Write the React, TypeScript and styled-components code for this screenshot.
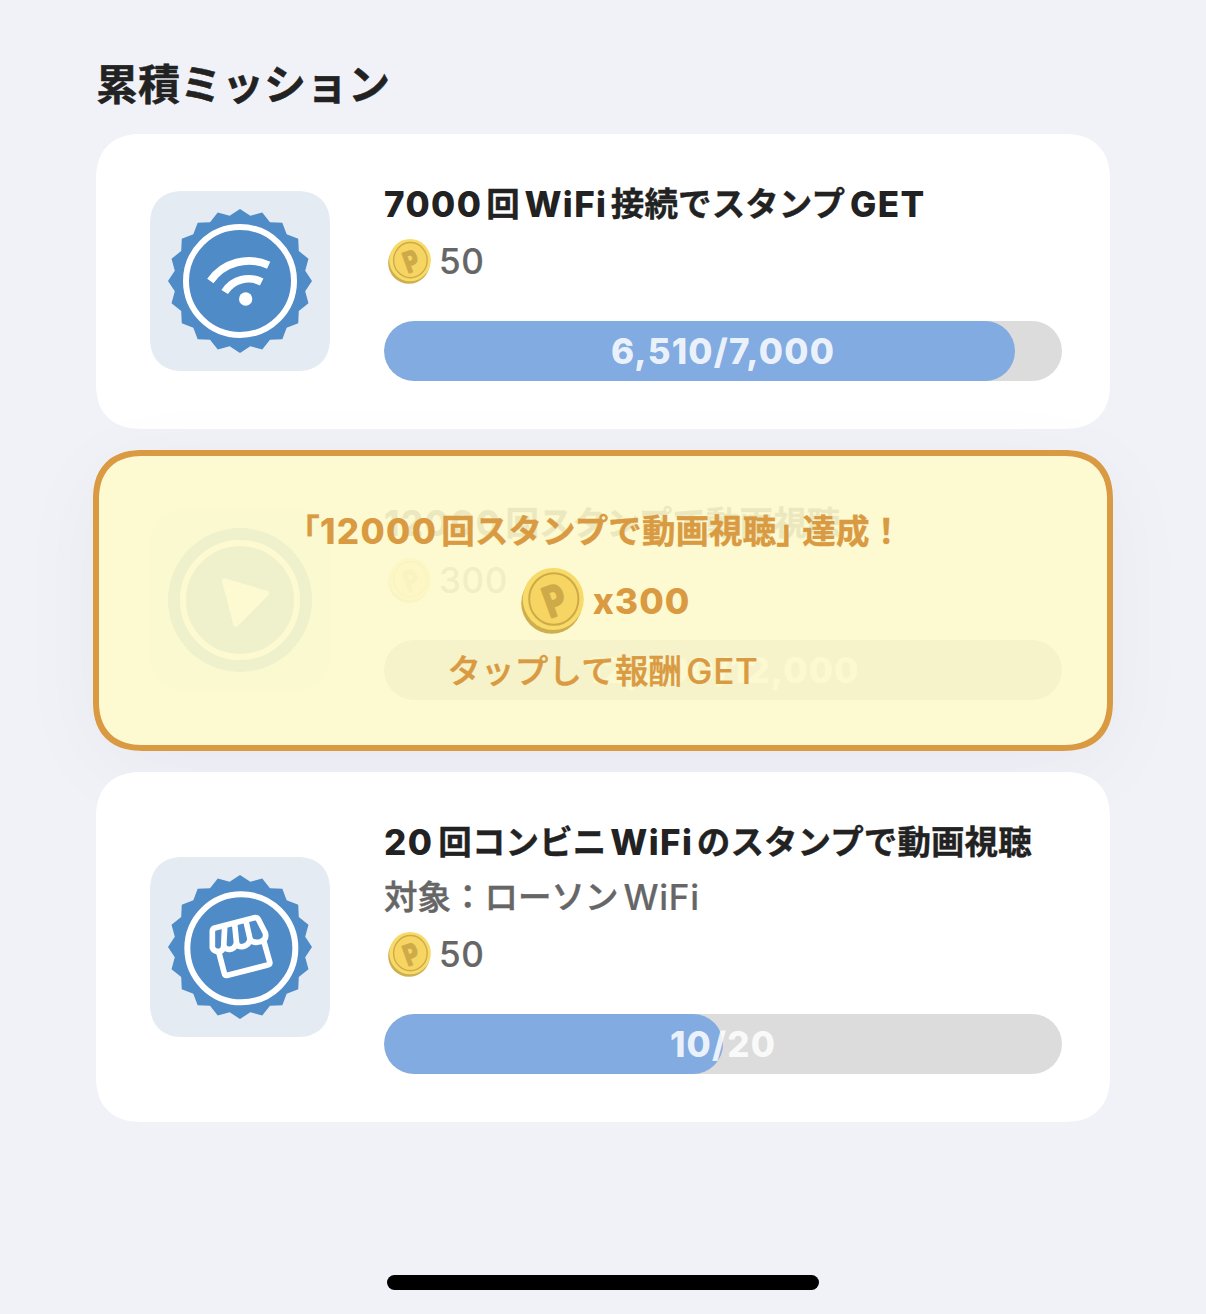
import React from 'react';
import styled, { createGlobalStyle, css } from 'styled-components';

const theme = {
  colors: {
    background: '#f1f2f8',
    surface: '#ffffff',
    textPrimary: '#222222',
    textSecondary: '#666666',
    badge: '#e4ebf3',
    seal: '#4f8bc7',
    track: '#dcdcdc',
    fill: '#82abe1',
    fillDone: '#a3a3a3',
    gold: '#d99a41',
    overlay: 'rgba(253, 250, 205, 0.92)',
  },
  font: `Inter, 'Noto Sans CJK JP', sans-serif`,
};

const GlobalStyle = createGlobalStyle`
  body {
    margin: 0;
    background: ${theme.colors.background};
    font-family: ${theme.font};
    color: ${theme.colors.textPrimary};
  }
`;

// Continuous corners where the browser can draw them
const smoothCorners = (radius: number, smoothRadius: number) => css`
  border-radius: ${radius}px;

  @supports (corner-shape: superellipse(1.25)) {
    border-radius: ${smoothRadius}px;
    corner-shape: superellipse(1.25);
  }
`;

const Page = styled.main`
  box-sizing: border-box;
  display: flex;
  flex-direction: column;
  width: 1206px;
  height: 1314px;
  padding: 55px 96px 24px;
  overflow: hidden;
`;

const Heading = styled.h1`
  margin: 0 0 19px;
  height: 60px;
  font-size: 42px;
  line-height: 60px;
  font-weight: 700;
  -webkit-text-stroke: 0.5px currentColor;
  white-space: nowrap;
`;

const MissionList = styled.div`
  display: flex;
  flex-direction: column;
  gap: 24px;
`;

const Card = styled.section`
  position: relative;
  z-index: 0;
  box-sizing: border-box;
  display: flex;
  align-items: center;
  gap: 54px;
  padding: 48px 48px 48px 54px;
  background: ${theme.colors.surface};
  ${smoothCorners(40, 46)}
`;

const Badge = styled.div`
  flex: none;
  width: 180px;
  height: 180px;
  margin-bottom: 1px;
  overflow: hidden;
  background: ${theme.colors.badge};
  ${smoothCorners(30, 34)}

  svg {
    display: block;
  }
`;

const Body = styled.div`
  flex: 1;
  min-width: 0;
`;

const lineText = css`
  display: flex;
  height: 42px;
  font-size: 33.5px;
  line-height: 42px;
  white-space: nowrap;
`;

const boldText = css`
  ${lineText}
  font-weight: 700;
  letter-spacing: 0.1px;
  -webkit-text-stroke: 0.4px currentColor;
`;

const mediumText = css`
  ${lineText}
  font-weight: 500;
  -webkit-text-stroke: 0.5px currentColor;
`;

const Title = styled.h2`
  ${boldText}
  margin: 0;
  padding-top: 1px;
`;

const Target = styled.p`
  ${mediumText}
  margin: 13px 0 0;
  color: ${theme.colors.textSecondary};
`;

const Latin = styled.span<{ $before?: number; $after?: number; $bold?: boolean }>`
  margin-left: ${props => props.$before ?? 0}px;
  margin-right: ${props => props.$after ?? 0}px;
  font-size: 35px;
  font-weight: ${props => (props.$bold ? 800 : 500)};
  letter-spacing: ${props => (props.$bold ? 1.4 : 0.7)}px;
  -webkit-text-stroke: ${props => (props.$bold ? 0 : 0.2)}px currentColor;
`;

const Reward = styled.div`
  display: flex;
  align-items: center;
  gap: 8px;
  height: 48px;
  margin: 12px 0 36px;
  padding-left: 4px;
  font-size: 35px;
  font-weight: 500;
  letter-spacing: 0.6px;
  -webkit-text-stroke: 0.2px currentColor;
  color: ${theme.colors.textSecondary};
`;

const Track = styled.div`
  display: grid;
  height: 60px;
  overflow: hidden;
  border-radius: 30px;
  background: ${theme.colors.track};
`;

const Fill = styled.div<{ $done: boolean }>`
  grid-area: 1 / 1;
  border-radius: 30px;
  background: ${props => (props.$done ? theme.colors.fillDone : theme.colors.fill)};
`;

const BarLabel = styled.span`
  grid-area: 1 / 1;
  z-index: 1;
  text-align: center;
  font-size: 35px;
  line-height: 60px;
  font-weight: 800;
  letter-spacing: 1.2px;
  color: rgba(255, 255, 255, 0.86);
`;

const Overlay = styled.button`
  position: absolute;
  inset: -3px;
  z-index: 2;
  box-sizing: border-box;
  display: flex;
  flex-direction: column;
  align-items: center;
  justify-content: center;
  gap: 16px;
  padding: 0;
  border: 6px solid ${theme.colors.gold};
  background: ${theme.colors.overlay};
  background-clip: padding-box;
  box-shadow: 0 18px 90px rgba(20, 20, 50, 0.04);
  font-family: inherit;
  color: ${theme.colors.gold};
  ${smoothCorners(43, 50)}
`;

const ClearedText = styled.span`
  ${boldText}
  padding-top: 1px;
`;

const Bracket = styled.span<{ $close?: boolean }>`
  width: 17px;
  display: flex;
  justify-content: ${props => (props.$close ? 'flex-start' : 'flex-end')};
  margin-right: ${props => (props.$close ? 9 : 0)}px;
`;

const ClearedReward = styled.span`
  display: flex;
  align-items: center;
  gap: 9px;
  height: 66px;
  padding-left: 5px;
  font-size: 35.5px;
  font-weight: 800;
  letter-spacing: 1px;
`;

const TapText = styled.span`
  ${mediumText}
  letter-spacing: 0.2px;
`;

const HomeIndicator = styled.div`
  align-self: center;
  width: 432px;
  height: 15px;
  margin-top: auto;
  border-radius: 8px;
  background: #000000;
`;

const SEAL_POINTS = Array.from({ length: 40 }, (_, i) => {
  const radius = i % 2 === 0 ? 216 : 198;
  const angle = (i * Math.PI) / 20;
  const x = 270 + radius * Math.sin(angle);
  const y = 270 - radius * Math.cos(angle);
  return `${x.toFixed(1)},${y.toFixed(1)}`;
}).join(' ');

const WifiSeal: React.FC = () => (
  <svg width="180" height="180" viewBox="0 0 540 540" fill="none">
    <polygon points={SEAL_POINTS} fill={theme.colors.seal} />
    <circle cx="270" cy="270" r="162" stroke="#fff" strokeWidth="18" />
    <g stroke="#fff" strokeWidth="23">
      <path d="M181 270A141 141 0 0 1 356 223" />
      <path d="M224 303A85 85 0 0 1 335 273" />
    </g>
    <circle cx="287" cy="324" r="20" fill="#fff" />
  </svg>
);

const ShopSeal: React.FC = () => (
  <svg width="180" height="180" viewBox="0 0 540 540" fill="none">
    <polygon points={SEAL_POINTS} fill={theme.colors.seal} />
    <circle cx="274" cy="274" r="162" stroke="#fff" strokeWidth="18" />
    <g stroke="#fff" strokeWidth="17" strokeLinecap="round" strokeLinejoin="round">
      <path d="M187 272V223Q187 215 194 213L313 182Q321 180 325 187L346 228Q351 248 332 254Q312 260 300 248Q296 266 278 269Q265 271 259 260Q253 276 240 277Q229 278 222 269Q216 285 204 284Q190 282 187 272Z" />
      <path d="M224 210L221 270M254 202L260 262M288 193L301 250" />
      <path d="M207 288L223 349Q225 357 233 355L353 324Q361 322 359 314L342 254" />
    </g>
  </svg>
);

const PlaySeal: React.FC = () => (
  <svg width="180" height="180" viewBox="0 0 540 540" fill="none">
    <circle cx="270" cy="270" r="216" fill={theme.colors.seal} />
    <circle cx="270" cy="270" r="171" stroke="#fff" strokeWidth="18" />
    <path
      d="M224 213L349 250L258 342Z"
      fill="#fff"
      stroke="#fff"
      strokeWidth="16"
      strokeLinejoin="round"
    />
  </svg>
);

const Coin: React.FC<{ width: number; height: number }> = ({ width, height }) => (
  <svg width={width} height={height} viewBox="0 0 63 66">
    <ellipse cx="30.7" cy="35.2" rx="30.5" ry="30.5" fill="#cfae4f" />
    <ellipse cx="32.3" cy="31" rx="30.5" ry="31" fill="#f7da67" />
    <ellipse cx="32.8" cy="31" rx="24.6" ry="25.8" fill="#f6d562" stroke="#cfaa49" strokeWidth="2" />
    <text
      transform="translate(33.6 32.2) rotate(-20) scale(0.8 1)"
      x="0.5"
      y="15.2"
      textAnchor="middle"
      fontFamily="Inter, sans-serif"
      fontSize="41"
      fontWeight="700"
      fill="#cfaa49"
      stroke="#cfaa49"
      strokeWidth="2.6"
      strokeLinejoin="round"
    >
      P
    </text>
  </svg>
);

interface MissionCardProps {
  seal: React.ReactNode;
  title: React.ReactNode;
  target?: React.ReactNode;
  points: number;
  current: number;
  goal: number;
  children?: React.ReactNode;
}

const MissionCard: React.FC<MissionCardProps> = ({
  seal,
  title,
  target,
  points,
  current,
  goal,
  children,
}) => (
  <Card>
    <Badge>{seal}</Badge>
    <Body>
      <Title>{title}</Title>
      {target && <Target>{target}</Target>}
      <Reward>
        <Coin width={43} height={45} />
        {points}
      </Reward>
      <Track>
        <Fill $done={current >= goal} style={{ width: `${(current / goal) * 100}%` }} />
        <BarLabel>
          {current.toLocaleString('en-US')}/{goal.toLocaleString('en-US')}
        </BarLabel>
      </Track>
    </Body>
    {children}
  </Card>
);

const App: React.FC = () => (
  <>
    <GlobalStyle />
    <Page>
      <Heading>累積ミッション</Heading>
      <MissionList>
        <MissionCard
          seal={<WifiSeal />}
          title={
            <>
              <Latin $bold $after={4}>7000</Latin>
              回
              <Latin $bold $before={4.5} $after={3.5}>WiFi</Latin>
              接続でスタンプ
              <Latin $bold $before={5}>GET</Latin>
            </>
          }
          points={50}
          current={6510}
          goal={7000}
        />
        <MissionCard
          seal={<PlaySeal />}
          title={
            <>
              <Latin $bold $after={4}>12000</Latin>
              回スタンプで動画視聴
            </>
          }
          points={300}
          current={12000}
          goal={12000}
        >
          <Overlay type="button">
            <ClearedText>
              <Bracket>「</Bracket>
              <Latin $bold $after={4}>12000</Latin>
              回スタンプで動画視聴
              <Bracket $close>」</Bracket>
              達成！
            </ClearedText>
            <ClearedReward>
              <Coin width={63} height={66} />
              x300
            </ClearedReward>
            <TapText>
              タップして報酬
              <Latin $before={4}>GET</Latin>
            </TapText>
          </Overlay>
        </MissionCard>
        <MissionCard
          seal={<ShopSeal />}
          title={
            <>
              <Latin $bold $after={5}>20</Latin>
              回コンビニ
              <Latin $bold $before={4} $after={3.5}>WiFi</Latin>
              のスタンプで動画視聴
            </>
          }
          target={
            <>
              対象：ローソン
              <Latin $before={5}>WiFi</Latin>
            </>
          }
          points={50}
          current={10}
          goal={20}
        />
      </MissionList>
      <HomeIndicator />
    </Page>
  </>
);

export default App;
